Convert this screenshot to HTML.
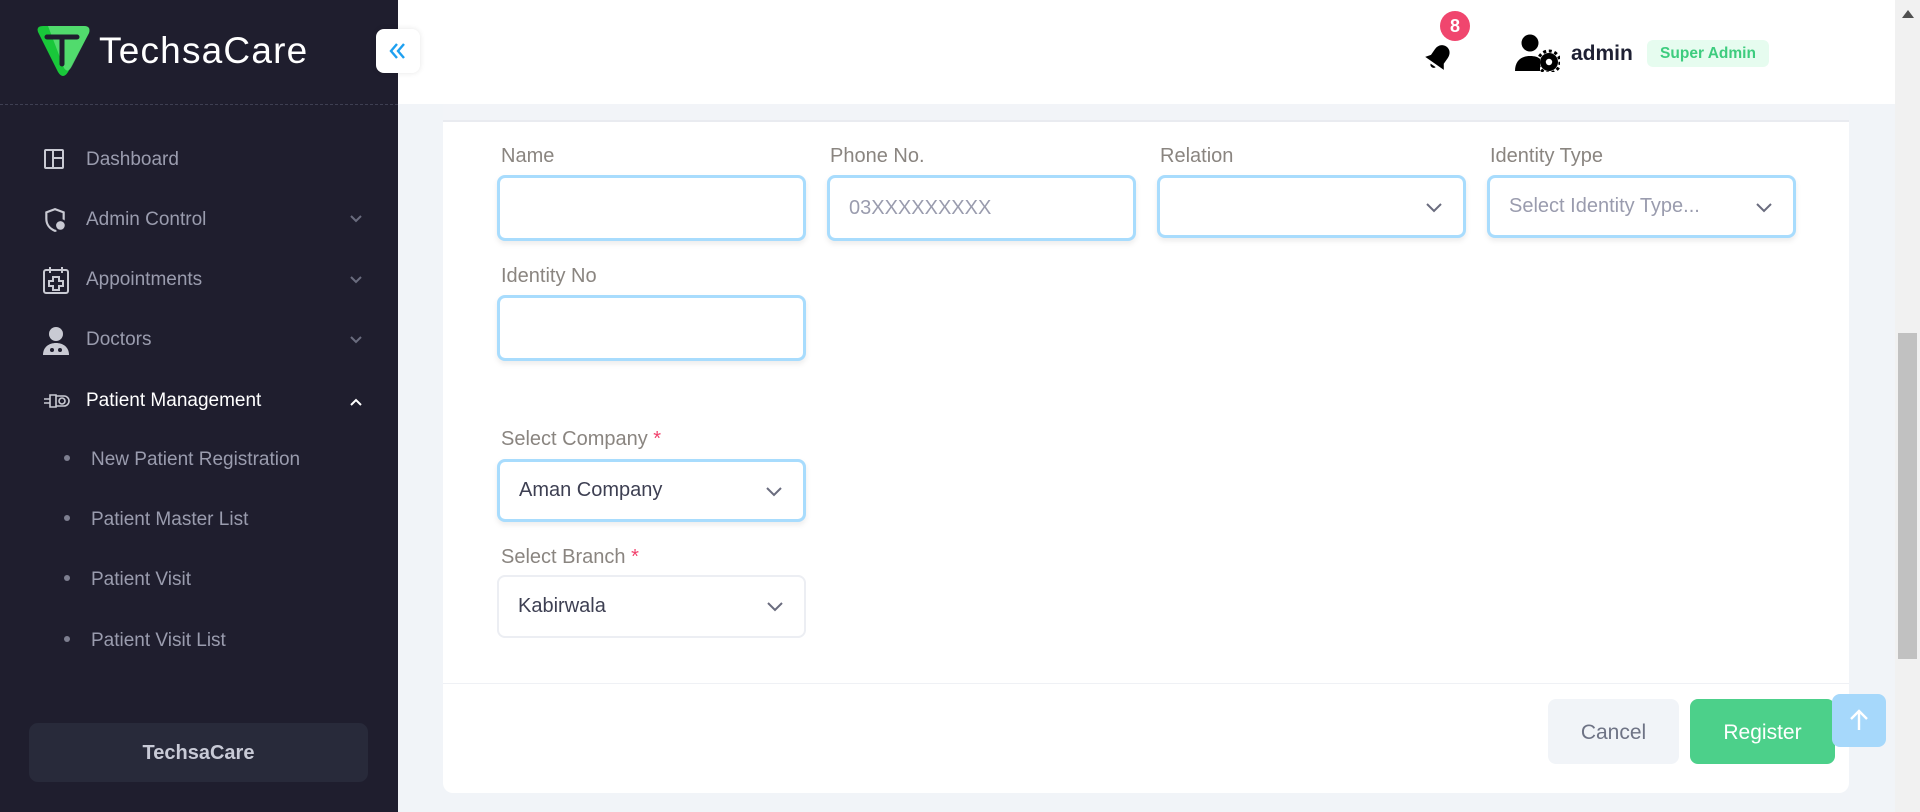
<!DOCTYPE html>
<html><head><meta charset="utf-8">
<style>
*{box-sizing:border-box;margin:0;padding:0}
body{width:1920px;height:812px;overflow:hidden;background:#f1f4f8;font-family:"Liberation Sans",sans-serif;position:relative}
.sb{position:absolute;left:0;top:0;width:398px;height:812px;background:#1f1e2e}
.sb .div{position:absolute;left:0;top:104px;width:398px;border-top:1px dashed #3e3f52}
.logo{position:absolute;left:99px;top:30px;font-size:37px;color:#fff;font-weight:300;letter-spacing:1.2px}
.mi{position:absolute;left:86px;font-size:19px;color:#9a9cae}
.ic{position:absolute;left:42px}
.chev{position:absolute;left:349px}
.sub{position:absolute;left:91px;font-size:19px;color:#9a9cae}
.dot{position:absolute;left:64px;width:6px;height:6px;border-radius:50%;background:#7d7f90}
.bbox{position:absolute;left:29px;top:723px;width:339px;height:59px;border-radius:9px;background:#282a3a;color:#c8cad6;font-size:20px;font-weight:bold;text-align:center;line-height:61px}
.hdr{position:absolute;left:398px;top:0;width:1497px;height:104px;background:#fff}
.collapse{position:absolute;left:376px;top:29px;width:44px;height:44px;background:#fff;border-radius:8px;box-shadow:0 0 6px rgba(0,0,0,.1)}
.scroll{position:absolute;left:1895px;top:0;width:25px;height:812px;background:#f1f1f1}
.thumb{position:absolute;left:1898px;top:333px;width:19px;height:326px;background:#c1c1c1}
.card{position:absolute;left:443px;top:104px;width:1406px;height:689px;background:#fff;border-radius:0 0 10px 10px}
.band{position:absolute;left:443px;top:104px;width:1406px;height:18px;background:#f2f4f8;border-bottom:2px solid #e9ebf0}
.lbl{position:absolute;font-size:20px;color:#8a8580}
.inp{position:absolute;width:309px;height:66px;border:3px solid #a8dcfd;border-radius:8px;background:#fff;box-shadow:0 3px 6px rgba(0,0,0,.08);font-size:20px;color:#9a9cae;padding-left:19px;display:flex;align-items:center}
.sel{height:63px}
.sel svg{position:absolute;right:20px;top:24px}
.req{color:#f1416c}
.btn{position:absolute;top:699px;height:65px;border-radius:8px;font-size:21px;text-align:center;line-height:67px}
</style></head><body>
<div class="sb">
 <svg style="position:absolute;left:34px;top:24px" width="58" height="54" viewBox="0 0 58 54">
  <path d="M4 8 Q2 2 9 2 L50 2 Q57 2 55 9 L34 48 Q29 56 24 48 Z" fill="#19c73a"/>
  <path d="M14 2 L50 2 Q57 2 55 9 L38 42 Q34 50 30 44 Z" fill="#5fe07a" opacity=".8"/>
  <path d="M13 13 L43 13 M28 13 L28 40" stroke="#1f1e2e" stroke-width="5" stroke-linecap="round" fill="none"/>
 </svg>
 <div class="logo">TechsaCare</div>
 <div class="div"></div>
 <svg class="ic" style="top:147px" width="24" height="24" viewBox="0 0 24 24" fill="none" stroke="#c9cad3" stroke-width="2"><rect x="3" y="3" width="18" height="18" rx="1"/><path d="M11 3v18M11 11h10"/></svg>
 <div class="mi" style="top:149px">Dashboard</div>
 <svg class="ic" style="top:207px" width="26" height="26" viewBox="0 0 24 24" fill="none" stroke="#c9cad3" stroke-width="2"><path d="M12 2l8 3v6c0 5-3 9-8 11C7 20 4 16 4 11V5z"/><circle cx="17" cy="17" r="5" fill="#c9cad3" stroke="#1f1e2e"/></svg>
 <div class="mi" style="top:209px">Admin Control</div>
 <svg class="chev" style="top:214px" width="14" height="10" viewBox="0 0 14 10"><path d="M2 2l5 5 5-5" stroke="#6a6c7e" stroke-width="2" fill="none"/></svg>
 <svg class="ic" style="top:265px" width="28" height="30" viewBox="0 0 28 30" fill="none" stroke="#c9cad3" stroke-width="2"><rect x="2" y="5" width="24" height="23" rx="2"/><path d="M8 2v6M20 2v6M11 12h6v4h4v5h-4v4h-6v-4H7v-5h4z"/></svg>
 <div class="mi" style="top:269px">Appointments</div>
 <svg class="chev" style="top:275px" width="14" height="10" viewBox="0 0 14 10"><path d="M2 2l5 5 5-5" stroke="#6a6c7e" stroke-width="2" fill="none"/></svg>
 <svg class="ic" style="top:326px" width="28" height="30" viewBox="0 0 28 30"><circle cx="14" cy="8" r="7" fill="#c9cad3"/><path d="M1 29c0-8 6-12 13-12s13 4 13 12z" fill="#c9cad3"/><circle cx="10" cy="24" r="2" fill="#1f1e2e"/><circle cx="18" cy="24" r="2" fill="#1f1e2e"/></svg>
 <div class="mi" style="top:329px">Doctors</div>
 <svg class="chev" style="top:335px" width="14" height="10" viewBox="0 0 14 10"><path d="M2 2l5 5 5-5" stroke="#6a6c7e" stroke-width="2" fill="none"/></svg>
 <svg class="ic" style="top:391px" width="28" height="20" viewBox="0 0 28 20" fill="none" stroke="#c9cad3" stroke-width="1.6"><path d="M2 8h6M2 12h6M8 4h6v12H8zM14 5h8a4 4 0 010 10h-8"/><circle cx="20" cy="10" r="3"/></svg>
 <div class="mi" style="top:390px;color:#fff">Patient Management</div>
 <svg class="chev" style="top:397px" width="14" height="10" viewBox="0 0 14 10"><path d="M2 8l5-5 5 5" stroke="#fff" stroke-width="2" fill="none"/></svg>
 <div class="dot" style="top:455px"></div><div class="sub" style="top:449px">New Patient Registration</div>
 <div class="dot" style="top:515px"></div><div class="sub" style="top:509px">Patient Master List</div>
 <div class="dot" style="top:575px"></div><div class="sub" style="top:569px">Patient Visit</div>
 <div class="dot" style="top:636px"></div><div class="sub" style="top:630px">Patient Visit List</div>
 <div class="bbox">TechsaCare</div>
</div>
<div class="hdr"></div>
<div class="collapse"><svg style="position:absolute;left:12px;top:13px" width="20" height="18" viewBox="0 0 20 18"><path d="M9 2L3 9l6 7M16 2l-6 7 6 7" stroke="#1ea0f0" stroke-width="2.4" fill="none"/></svg></div>
<svg style="position:absolute;left:1422px;top:40px" width="34" height="34" viewBox="0 0 24 24"><g transform="rotate(35 12 12)"><path d="M12 3c-3.5 0-5.5 2.8-5.5 6v5L4 17.5h16L17.5 14V9c0-3.2-2-6-5.5-6z" fill="#000"/><path d="M9.8 19.2a2.3 2.3 0 004.4 0z" fill="#000"/></g></svg>
<div style="position:absolute;left:1440px;top:11px;width:30px;height:30px;border-radius:50%;background:#f0466e;color:#fff;font-weight:bold;font-size:18px;text-align:center;line-height:30px">8</div>
<svg style="position:absolute;left:1514px;top:34px" width="46" height="38" viewBox="0 0 46 38"><circle cx="16" cy="9" r="8.5" fill="#000"/><path d="M1 37c0-10 6-15 15-15 5 0 8 1 10 3v12z" fill="#000"/><circle cx="35" cy="28" r="9" fill="#000"/><circle cx="35" cy="28" r="11" fill="none" stroke="#000" stroke-width="3" stroke-dasharray="3 2.7"/><circle cx="35" cy="28" r="3.2" fill="#fff"/></svg>
<div style="position:absolute;left:1571px;top:42px;font-size:21px;font-weight:bold;color:#1e2033">admin</div>
<div style="position:absolute;left:1647px;top:40px;width:122px;height:27px;border-radius:6px;background:#e6fcef;color:#3dcc7e;font-weight:bold;font-size:15.5px;text-align:center;line-height:28px">Super Admin</div>
<div class="card"></div>
<div class="band"></div>
<div class="lbl" style="left:501px;top:145px">Name</div>
<div class="lbl" style="left:830px;top:145px">Phone No.</div>
<div class="lbl" style="left:1160px;top:145px">Relation</div>
<div class="lbl" style="left:1490px;top:145px">Identity Type</div>
<div class="inp" style="left:497px;top:175px"></div>
<div class="inp" style="left:827px;top:175px">03XXXXXXXXX</div>
<div class="inp sel" style="left:1157px;top:175px"><svg width="18" height="12" viewBox="0 0 18 12"><path d="M2 2l7 7 7-7" stroke="#6a6c7e" stroke-width="2" fill="none"/></svg></div>
<div class="inp sel" style="left:1487px;top:175px">Select Identity Type...<svg width="18" height="12" viewBox="0 0 18 12"><path d="M2 2l7 7 7-7" stroke="#6a6c7e" stroke-width="2" fill="none"/></svg></div>
<div class="lbl" style="left:501px;top:265px">Identity No</div>
<div class="inp" style="left:497px;top:295px"></div>
<div class="lbl" style="left:501px;top:428px">Select Company <span class="req">*</span></div>
<div class="inp sel" style="left:497px;top:459px;color:#3d3f52">Aman Company<svg width="18" height="12" viewBox="0 0 18 12"><path d="M2 2l7 7 7-7" stroke="#6a6c7e" stroke-width="2" fill="none"/></svg></div>
<div class="lbl" style="left:501px;top:546px">Select Branch <span class="req">*</span></div>
<div class="inp sel" style="left:497px;top:575px;color:#3d3f52;border:2px solid #eceef3;box-shadow:none">Kabirwala<svg width="18" height="12" viewBox="0 0 18 12"><path d="M2 2l7 7 7-7" stroke="#6a6c7e" stroke-width="2" fill="none"/></svg></div>
<div style="position:absolute;left:443px;top:683px;width:1406px;border-top:1px solid #eff1f5"></div>
<div class="btn" style="left:1548px;width:131px;background:#f1f4f8;color:#6e7385">Cancel</div>
<div class="btn" style="left:1690px;width:145px;background:#4cd08a;color:#fff">Register</div>
<div style="position:absolute;left:1832px;top:694px;width:54px;height:53px;border-radius:8px;background:#a6d8fb"><svg style="position:absolute;left:16px;top:14px" width="22" height="24" viewBox="0 0 22 24"><path d="M11 22V3M3 11l8-8 8 8" stroke="#fff" stroke-width="2.4" fill="none"/></svg></div>
<div class="scroll"></div>
<svg style="position:absolute;left:1902px;top:10px" width="12" height="8" viewBox="0 0 12 8"><path d="M0 8L6 0l6 8z" fill="#505050"/></svg>
<div class="thumb"></div>
</body></html>
